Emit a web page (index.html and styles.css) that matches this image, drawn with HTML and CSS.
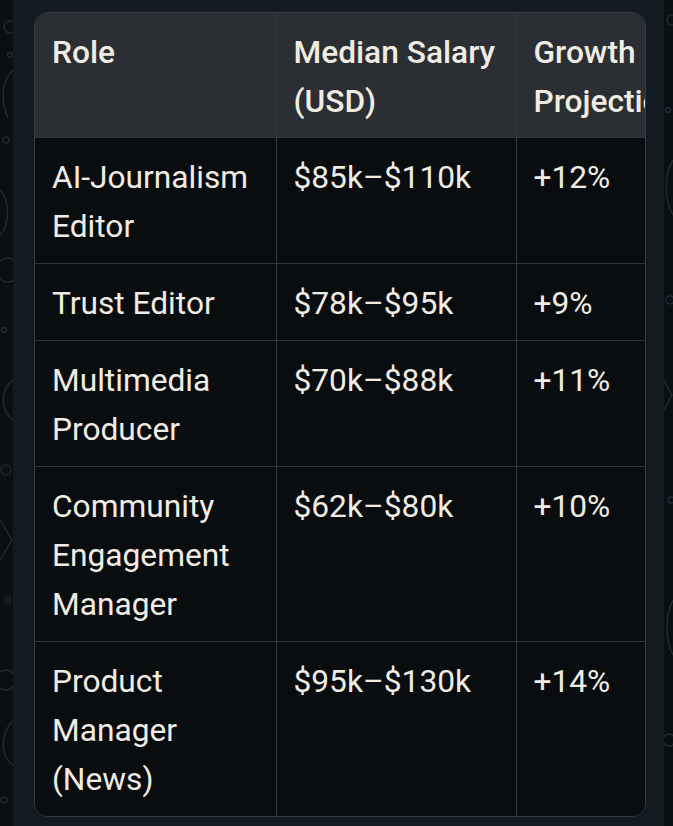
FILE: index.html
```html
<!DOCTYPE html>
<html>
<head>
<meta charset="utf-8">
<link rel="stylesheet" href="styles.css">
</head>
<body>
<div class="screen">
  <div class="wall wall-left">
    <svg width="13" height="826" viewBox="0 0 13 826" fill="none" stroke="#1f2a31" stroke-width="1.5">
      <circle cx="10" cy="27" r="6"/>
      <circle cx="10" cy="55" r="2.5"/>
      <path d="M13 70 C2 80 0 100 8 118"/>
      <circle cx="6" cy="140" r="3"/>
      <path d="M0 190 C10 200 10 225 0 235"/>
      <circle cx="8" cy="270" r="12"/>
      <circle cx="4" cy="330" r="2.5"/>
      <path d="M13 380 C0 390 0 410 13 420"/>
      <circle cx="6" cy="470" r="5"/>
      <path d="M0 520 L12 540 L0 560"/>
      <circle cx="8" cy="600" r="2.5"/>
      <circle cx="6" cy="680" r="10"/>
      <path d="M13 720 C0 735 0 755 13 765"/>
      <circle cx="4" cy="800" r="3"/>
    </svg>
  </div>
  <div class="bubble">
    <div class="table-wrap">
      <table class="grid">
        <colgroup>
          <col class="c1"><col class="c2"><col class="c3">
        </colgroup>
        <thead>
          <tr>
            <th>Role</th>
            <th>Median Salary (USD)</th>
            <th>Growth Projection</th>
          </tr>
        </thead>
        <tbody>
          <tr><td>AI-Journalism Editor</td><td>$85k–$110k</td><td>+12%</td></tr>
          <tr><td>Trust Editor</td><td>$78k–$95k</td><td>+9%</td></tr>
          <tr><td>Multimedia Producer</td><td>$70k–$88k</td><td>+11%</td></tr>
          <tr><td>Community Engagement Manager</td><td>$62k–$80k</td><td>+10%</td></tr>
          <tr><td>Product Manager (News)</td><td>$95k–$130k</td><td>+14%</td></tr>
        </tbody>
      </table>
    </div>
  </div>
  <div class="wall wall-right">
    <svg width="9" height="826" viewBox="0 0 9 826" fill="none" stroke="#1f2a31" stroke-width="1.5">
      <circle cx="8" cy="20" r="5"/>
      <circle cx="4" cy="110" r="2.5"/>
      <path d="M9 160 C0 175 0 200 9 215"/>
      <circle cx="6" cy="300" r="4"/>
      <path d="M0 380 L8 395 L0 410"/>
      <circle cx="7" cy="500" r="3"/>
      <path d="M9 600 C1 615 1 640 9 655"/>
      <circle cx="5" cy="740" r="6"/>
    </svg>
  </div>
</div>
</body>
</html>
```
FILE: styles.css
```css
html, body {
  margin: 0;
  padding: 0;
  background: #0a0f12;
}
.screen {
  display: flex;
  width: 673px;
  height: 826px;
  overflow: hidden;
}
.wall {
  flex: none;
  background: #0a0f12;
}
.wall-left { width: 13px; }
.wall-right { width: 9px; }
.wall svg { display: block; }
.bubble {
  flex: none;
  width: 651px;
  background: #111b21;
  padding: 12px 18px 0 21px;
  box-sizing: border-box;
}
.table-wrap {
  width: 612px;
  border: 1px solid #383d42;
  border-radius: 14px;
  overflow: hidden;
  box-sizing: border-box;
  background: #0a0d10;
}
.grid {
  border-collapse: collapse;
  table-layout: fixed;
  width: 692px;
  font-family: Roboto, "Noto Sans", sans-serif;
  font-size: 31.7px;
  line-height: 49px;
  color: #f0ece3;
}
.c1 { width: 241px; }
.c2 { width: 240px; }
.c3 { width: 211px; }
.grid th, .grid td {
  text-align: left;
  vertical-align: top;
  padding: 15px 17px 12px 17px;
  border: 1px solid #32373b;
}
.grid tr > :first-child { border-left: none; }
.grid thead tr > * { border-top: none; }
.grid tbody tr:last-child > * { border-bottom: none; }
.grid th {
  font-weight: 500;
  background: #2b2e32;
  padding-top: 15px;
  padding-bottom: 11px;
}
.grid td {
  background: #0a0d10;
}
```
